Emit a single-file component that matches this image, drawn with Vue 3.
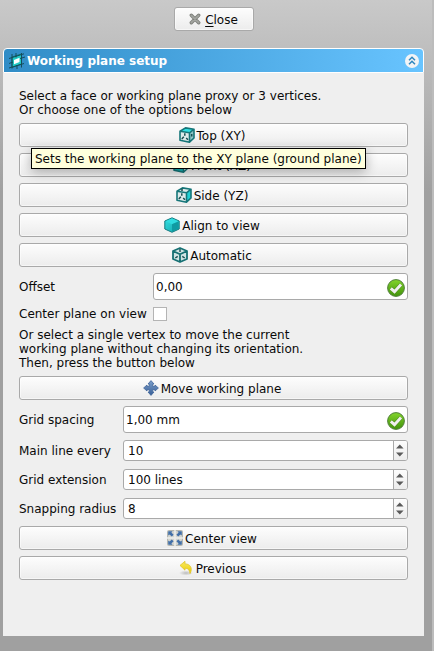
<script setup>
const planes = [
  { icon: 'top', label: 'Top (XY)' },
  { icon: 'front', label: 'Front (XZ)' },
  { icon: 'side', label: 'Side (YZ)' },
  { icon: 'view', label: 'Align to view' },
  { icon: 'auto', label: 'Automatic' },
]
const spins = [
  { label: 'Main line every', value: '10' },
  { label: 'Grid extension', value: '100 lines' },
  { label: 'Snapping radius', value: '8' },
]
</script>

<template>
  <div class="dock">
    <svg class="defs" aria-hidden="true">
      <defs>
        <linearGradient id="ok" x1="0" y1="0" x2="0" y2="1">
          <stop offset="0" stop-color="#83d52c" />
          <stop offset="1" stop-color="#41920a" />
        </linearGradient>
        <linearGradient id="teal" x1="0" y1="0" x2="1" y2="1">
          <stop offset="0" stop-color="#35dfe2" />
          <stop offset="1" stop-color="#12a5ab" />
        </linearGradient>
        <linearGradient id="blue" x1="0" y1="0" x2="0" y2="1">
          <stop offset="0" stop-color="#7c9fcb" />
          <stop offset="1" stop-color="#375f97" />
        </linearGradient>
        <linearGradient id="gold" x1="0" y1="0" x2="0" y2="1">
          <stop offset="0" stop-color="#f7ea62" />
          <stop offset="1" stop-color="#eccb00" />
        </linearGradient>
        <radialGradient id="shade">
          <stop offset="0" stop-color="#000" stop-opacity=".22" />
          <stop offset="1" stop-color="#000" stop-opacity="0" />
        </radialGradient>
      </defs>
      <symbol id="i-top" viewBox="0 0 16 16">
        <path d="M1 4.3 6.5 .9 15 2.2 10.5 5.8Z" fill="#2fe0e2" />
        <path d="M1 4.3 10.5 5.8V15.2L1 13.2Z" fill="#dceaea" />
        <path d="M10.5 5.8 15 2.2V11L10.5 15.2Z" fill="#8fc4c5" />
        <path d="M1 4.3 6.5 .9 15 2.2 10.5 5.8ZM1 4.3V13.2L10.5 15.2V5.8M15 2.2V11L10.5 15.2" fill="none" stroke="#167679" stroke-width="1.6" stroke-linejoin="round" />
        <path d="M5.8 6.2V8.8M4.8 9.8 2.8 12M7.2 11 9 12.8M12.7 7V9.5" fill="none" stroke="#174f51" stroke-width="1.5" />
      </symbol>
      <symbol id="i-front" viewBox="0 0 16 16">
        <path d="M1 4.3 6.5 .9 15 2.2 10.5 5.8V15.2Z" fill="#dceaea" />
        <path d="M1 4.3 10.5 5.8V15.2L1 13.2Z" fill="#16b5b9" />
        <path d="M1 4.3 6.5 .9 15 2.2 10.5 5.8ZM1 4.3V13.2L10.5 15.2V5.8M15 2.2V11L10.5 15.2" fill="none" stroke="#167679" stroke-width="1.5" stroke-linejoin="round" />
      </symbol>
      <symbol id="i-side" viewBox="0 0 16 16">
        <path d="M1 4.3 6.5 .9 15 2.2 10.5 5.8V15.2L1 13.2Z" fill="#dceaea" />
        <path d="M10.5 5.8 15 2.2V11L10.5 15.2Z" fill="#20d0d4" />
        <path d="M1 4.3 6.5 .9 15 2.2 10.5 5.8ZM1 4.3V13.2L10.5 15.2V5.8M15 2.2V11L10.5 15.2" fill="none" stroke="#167679" stroke-width="1.6" stroke-linejoin="round" />
        <path d="M6 1.5V4M5.8 6.2V8.8M4.8 9.8 2.8 12M7.2 11 9 12.8" fill="none" stroke="#174f51" stroke-width="1.5" />
      </symbol>
      <symbol id="i-view" viewBox="0 0 16 16">
        <path d="M8 .8 15.2 4V12L8 15.3 .8 12V4Z" fill="url(#teal)" stroke="#167b80" stroke-width="1" />
        <path d="M8 1.4 14.4 4.3 8 7.3 1.6 4.3Z" fill="#30dce0" />
        <path d="M8 7.3 14.4 4.4V11.7L8 14.7Z" fill="#109ba2" />
      </symbol>
      <symbol id="i-auto" viewBox="0 0 16 16">
        <path d="M8 1 15 4V12L8 15 1 12V4Z" fill="#cfe3e3" />
        <path d="M8 1 15 4V12L8 15 1 12V4ZM1 4 8 7.3 15 4M8 7.3V15" fill="none" stroke="#167073" stroke-width="1.8" stroke-linejoin="round" />
        <path d="M8 2V5M3.3 11 5.7 9.4M12.7 11 10.3 9.4" stroke="#174f51" stroke-width="1.4" />
      </symbol>
      <symbol id="i-move" viewBox="0 0 16 16">
        <path d="M8 .6 11 4H9.7V6.3H12V5L15.4 8 12 11V9.7H9.7V12H11L8 15.4 5 12H6.3V9.7H4V11L.6 8 4 5V6.3H6.3V4H5Z" fill="url(#blue)" stroke="#40659a" stroke-width=".8" />
      </symbol>
      <symbol id="i-center" viewBox="0 0 16 16">
        <rect x=".5" y=".5" width="15" height="15" rx="1" fill="#d2d4cf" stroke="#b4b6b0" />
        <path d="M8 0V16M0 8H16" stroke="#eeeeec" stroke-width="1.6" />
        <path id="arrow" d="M1.2 1.2H5.6L4.4 2.6 6.6 4.8 4.8 6.6 2.6 4.4 1.2 5.6Z" fill="#426fa8" />
        <use href="#arrow" transform="matrix(-1 0 0 1 16 0)" />
        <use href="#arrow" transform="matrix(1 0 0 -1 0 16)" />
        <use href="#arrow" transform="matrix(-1 0 0 -1 16 16)" />
      </symbol>
      <symbol id="i-undo" viewBox="0 0 16 16">
        <ellipse cx="8" cy="13" rx="7" ry="2.6" fill="url(#shade)" />
        <path d="M2 5.4 7 1.3V3.9C12.5 3.9 15 8.4 12 13.6 11.6 10.2 10.3 8.1 7 8.2V10.2Z" fill="url(#gold)" stroke="#dfc42c" stroke-width=".8" stroke-linejoin="round" />
      </symbol>
      <symbol id="i-ok" viewBox="0 0 18 18">
        <circle cx="9" cy="9" r="8.4" fill="url(#ok)" stroke="#53803e" stroke-width="1" />
        <path d="M3.8 9.3 7.5 12.7 14 5.5" fill="none" stroke="#4a8c1c" stroke-width="4" />
        <path d="M3.8 9.3 7.5 12.7 14 5.5" fill="none" stroke="#f0f0ee" stroke-width="3" />
      </symbol>
    </svg>

    <div class="top">
      <button class="btn close">
        <svg class="x" viewBox="0 0 12 12">
          <path d="M2.3 2.3 9.7 9.7M9.7 2.3 2.3 9.7" stroke="#7d7f7a" stroke-width="3.4" stroke-linecap="round" />
          <path d="M2.3 2.3 9.7 9.7M9.7 2.3 2.3 9.7" stroke="#a3a5a0" stroke-width="1.7" stroke-linecap="round" />
        </svg>
        <span><u>C</u>lose</span>
      </button>
    </div>

    <section class="panel">
      <header class="head">
        <svg class="logo" viewBox="0 0 16 16">
          <path d="M3 4 12.5 1V11L3 14.5Z" fill="#20c9c5" stroke="#126e72" />
          <path d="M3 1V15.5M7 0V4.5M12.5 0V14.5M0 5.5 15 .8M0 10.5 4 9M0 15 15 10.5M11 5.5 16 4M8 12V16" fill="none" stroke="#144e5b" stroke-width="1" />
          <path d="M5 7 10.5 4.8V9L5 11.2Z" fill="#fff" />
        </svg>
        <span class="title">Working plane setup</span>
        <svg class="fold" viewBox="0 0 14 14">
          <circle cx="7" cy="7" r="7" fill="#f2f4f6" />
          <path d="M4 6.3 7 3.3 10 6.3M4 10.3 7 7.3 10 10.3" fill="none" stroke="#2f87bf" stroke-width="1.5" />
        </svg>
      </header>

      <div class="body">
        <p>Select a face or working plane proxy or 3 vertices.<br>Or choose one of the options below</p>
        <div v-for="p in planes" :key="p.icon" class="slot">
          <button class="btn">
            <svg class="ico"><use :href="'#i-' + p.icon" /></svg>
            <span>{{ p.label }}</span>
          </button>
          <div v-if="p.icon === 'top'" class="tip">Sets the working plane to the XY plane (ground plane)</div>
        </div>
        <div class="row wide">
          <label>Offset</label>
          <div class="field tall">0,00<svg class="ok"><use href="#i-ok" /></svg></div>
        </div>
        <div class="row wide check">
          <label>Center plane on view</label>
          <span class="box"></span>
        </div>
        <p>Or select a single vertex to move the current<br>working plane without changing its orientation.<br>Then, press the button below</p>
        <button class="btn">
          <svg class="ico"><use href="#i-move" /></svg><span>Move working plane</span>
        </button>
        <div class="row">
          <label>Grid spacing</label>
          <div class="field tall">1,00 mm<svg class="ok"><use href="#i-ok" /></svg></div>
        </div>
        <div v-for="s in spins" :key="s.label" class="row spinrow">
          <label>{{ s.label }}</label>
          <div class="field spin">
            <span class="val">{{ s.value }}</span>
            <span class="arrows">
              <svg viewBox="0 0 13 19">
                <path d="M2 7.5 5.8 3.5 9.6 7.5ZM2 11.5 5.8 15.5 9.6 11.5Z" fill="#5a5a5a" />
              </svg>
            </span>
          </div>
        </div>
        <button class="btn">
          <svg class="ico"><use href="#i-center" /></svg><span>Center view</span>
        </button>
        <button class="btn">
          <svg class="ico"><use href="#i-undo" /></svg><span>Previous</span>
        </button>
      </div>
    </section>
  </div>
</template>

<style>
body { margin: 0; overflow: hidden; }
</style>

<style scoped>
.dock {
  box-sizing: border-box;
  width: 434px;
  height: 651px;
  padding: 7px 8px 0 3px;
  border-right: 2px solid #bcbcbc;
  background: linear-gradient(#c9c9c9 0, #a0a0a0 192px);
  font: 12px/14px "DejaVu Sans", sans-serif;
  color: #0a0a0a;
}
.defs { position: absolute; width: 0; height: 0; }
.top { display: flex; justify-content: center; height: 41px; }
.btn {
  box-sizing: border-box;
  display: flex;
  align-items: center;
  justify-content: center;
  gap: 2px;
  width: 100%;
  height: 24px;
  padding: 0 3px 0 0;
  border: 1px solid #a9a9a9;
  border-radius: 3px;
  background: linear-gradient(#fdfdfd, #ececec);
  box-shadow: inset 0 0 0 1px rgba(255, 255, 255, .5);
  font: inherit;
  color: inherit;
  white-space: nowrap;
}
.btn span { padding-top: 1px; }
.close { width: 80px; padding: 0; gap: 4px; }
.x { width: 12px; height: 12px; }
u { text-decoration-thickness: 1px; text-underline-offset: 2px; }
.ico { width: 16px; height: 16px; flex: none; }
.panel { width: 421px; height: 588px; }
.head {
  box-sizing: border-box;
  display: flex;
  align-items: center;
  height: 25px;
  padding: 0 4px 0 5px;
  border: 1px solid #fff;
  border-radius: 4px 4px 0 0;
  background: linear-gradient(90deg, #308cc6, #68c4ff);
}
.logo { width: 16px; height: 16px; }
.title { flex: 1; margin-left: 2px; font-weight: bold; color: #fff; }
.fold { width: 14px; height: 14px; }
.body {
  box-sizing: border-box;
  display: flex;
  flex-direction: column;
  gap: 6px;
  height: 563px;
  padding: 16px;
  background: #efefef;
}
p { margin: 0; white-space: nowrap; }
.slot { position: relative; }
.tip {
  position: absolute;
  z-index: 2;
  left: 12px;
  top: 25px;
  box-sizing: border-box;
  width: 335px;
  height: 21px;
  padding: 3px 3px;
  border: 1px solid #000;
  background: #ffffdc;
  box-shadow: 0 3px 12px rgba(0, 0, 0, .3);
  line-height: 14px;
  white-space: nowrap;
}
.row {
  display: grid;
  grid-template-columns: 104px 1fr;
  align-items: center;
}
.row.wide { grid-template-columns: 134px 1fr; }
.row label { white-space: nowrap; }
.spinrow { height: 23px; }
.check { height: 16px; }
.field {
  box-sizing: border-box;
  display: flex;
  align-items: center;
  justify-content: space-between;
  border: 1px solid #a9a9a9;
  border-radius: 3px;
  background: #fff;
}
.tall { height: 27px; padding-left: 2px; }
.ok { width: 18px; height: 18px; margin: 3px 2px 0 0; }
.spin { height: 21px; overflow: hidden; }
.val { margin-left: 4px; }
.arrows {
  width: 13px;
  height: 19px;
  border-left: 1px solid #a9a9a9;
  background: linear-gradient(#fdfdfd, #ececec);
}
.arrows svg { display: block; width: 13px; height: 19px; }
.box {
  box-sizing: border-box;
  width: 14px;
  height: 14px;
  border: 1px solid #b4b4b4;
  background: #fff;
}
</style>
